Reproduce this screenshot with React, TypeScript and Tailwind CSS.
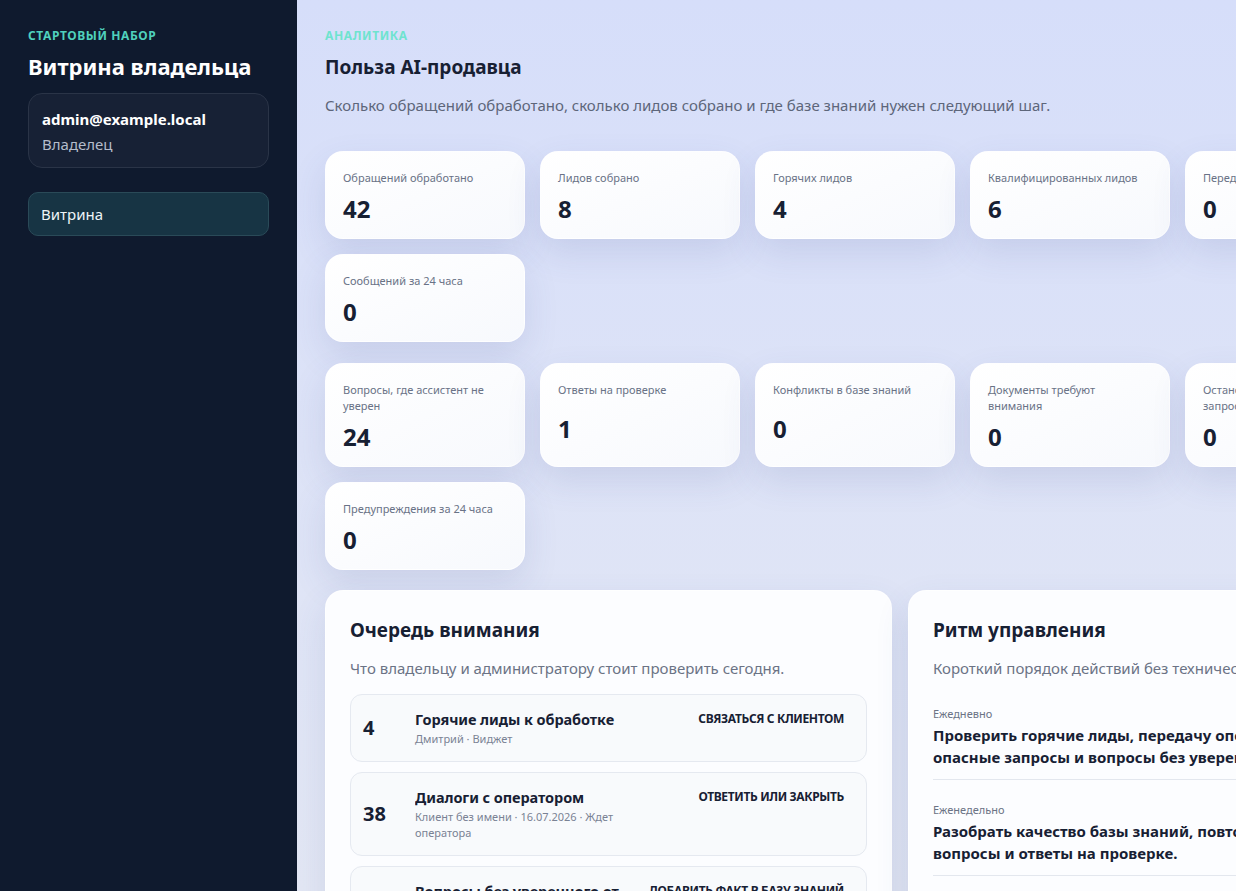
import React from "react";

type Metric = { label: string; value: number };

const usage: Metric[] = [
  { label: "Обращений обработано", value: 42 },
  { label: "Лидов собрано", value: 8 },
  { label: "Горячих лидов", value: 4 },
  { label: "Квалифицированных лидов", value: 6 },
  { label: "Передано оператору", value: 0 },
  { label: "Сообщений за 24 часа", value: 0 },
];

const quality: Metric[] = [
  { label: "Вопросы, где ассистент не уверен", value: 24 },
  { label: "Ответы на проверке", value: 1 },
  { label: "Конфликты в базе знаний", value: 0 },
  { label: "Документы требуют внимания", value: 0 },
  { label: "Остановленные опасные запросы", value: 0 },
  { label: "Предупреждения за 24 часа", value: 0 },
];

const queue = [
  { count: 4, title: "Горячие лиды к обработке", meta: "Дмитрий · Виджет", action: "Связаться с клиентом" },
  {
    count: 38,
    title: "Диалоги с оператором",
    meta: "Клиент без имени · 16.07.2026 · Ждет оператора",
    action: "Ответить или закрыть",
  },
  {
    count: 24,
    title: "Вопросы без уверенного ответа",
    meta: "Что входит в тариф · Виджет",
    action: "Добавить факт в базу знаний",
  },
];

const rhythm = [
  {
    when: "Ежедневно",
    text: "Проверить горячие лиды, передачу оператору, ошибки бота, опасные запросы и вопросы без уверенного ответа.",
  },
  {
    when: "Еженедельно",
    text: "Разобрать качество базы знаний, повторяющиеся обращения, вопросы и ответы на проверке.",
  },
  {
    when: "Ежемесячно",
    text: "Сверить цены, условия и документы с тем, что говорит ассистент.",
  },
];

function MetricGrid({ items }: { items: Metric[] }) {
  return (
    <div className="grid grid-cols-[repeat(auto-fill,200px)] gap-[15px]">
      {items.map((m) => (
        <div
          key={m.label}
          className="flex flex-col justify-between gap-[7px] rounded-[18px] border border-white/70 bg-gradient-to-br from-white to-[#f7f9fd] px-[17px] pt-[18px] pb-[6px] shadow-[0_14px_34px_rgba(60,80,150,0.13)]"
        >
          <div className="text-[11px] leading-[16px] text-[#697286]">{m.label}</div>
          <div className="text-[24px] font-bold leading-[32px] text-[#172033]">{m.value}</div>
          <div />
        </div>
      ))}
    </div>
  );
}

export default function App() {
  return (
    <div className="flex h-screen overflow-hidden font-['Noto_Sans',sans-serif]">
      <aside className="w-[297px] shrink-0 bg-[#0f1a2e] px-[28px] pt-[28px]">
        <div className="text-[12px] font-bold uppercase leading-[16px] tracking-[0.05em] text-[#4fd1bd]">
          Стартовый набор
        </div>
        <h1 className="mt-[7px] text-[22px] font-bold leading-[30px] text-white">Витрина владельца</h1>

        <div className="mt-[12px] flex flex-col gap-[3px] rounded-[14px] border border-[#2a3447] bg-[#172135] px-[13px] pt-[14px] pb-[12px]">
          <div className="text-[15px] font-bold leading-[22px] text-white">admin@example.local</div>
          <div className="text-[15px] leading-[22px] text-[#b4bccb]">Владелец</div>
        </div>

        <nav className="mt-[24px]">
          <div className="flex h-[44px] items-center rounded-[10px] border border-[#2a4a58] bg-[#173444] px-[12px] text-[15px] text-[#eef4f7]">
            Витрина
          </div>
        </nav>
      </aside>

      <main className="w-[1206px] shrink-0 bg-gradient-to-b from-[#d6defa] via-[#dde3f7] to-[#e3e7f4] px-[28px] pt-[28px]">
        <div className="w-[1150px]">
          <div className="text-[12px] font-bold uppercase leading-[16px] tracking-[0.05em] text-[#6fe3cf]">
            Аналитика
          </div>
          <h2 className="mt-[10px] text-[19px] font-bold leading-[26px] text-[#172033]">Польза AI-продавца</h2>
          <p className="mt-[14px] text-[15px] leading-[22px] text-[#5d667a]">
            Сколько обращений обработано, сколько лидов собрано и где базе знаний нужен следующий шаг.
          </p>

          <div className="mt-[35px]">
            <MetricGrid items={usage} />
          </div>
          <div className="mt-[21px]">
            <MetricGrid items={quality} />
          </div>

          <div className="mt-[20px] grid grid-cols-2 gap-[16px]">
            <section className="rounded-[18px] border border-white/80 bg-[#fcfdff] p-[24px] shadow-[0_14px_34px_rgba(60,80,150,0.12)]">
              <h3 className="text-[19px] font-bold leading-[30px] text-[#172033]">Очередь внимания</h3>
              <p className="mt-[12px] text-[15px] leading-[22px] text-[#6b7385]">
                Что владельцу и администратору стоит проверить сегодня.
              </p>
              <div className="mt-[15px] flex flex-col gap-[10px]">
                {queue.map((q) => (
                  <div
                    key={q.title}
                    className="grid grid-cols-[38px_minmax(0,1fr)_196px] items-center gap-[14px] rounded-[12px] border border-[#e5e9f0] bg-[#f8fafc] py-[14px] pr-[22px] pl-[12px]"
                  >
                    <div className="text-[20px] font-bold leading-[28px] text-[#172033]">{q.count}</div>
                    <div className="flex min-w-0 flex-col gap-[2px]">
                      <div className="truncate text-[14.5px] font-bold leading-[20px] tracking-[-0.005em] text-[#172033]">
                        {q.title}
                      </div>
                      <div className="text-[11px] leading-[16px] text-[#7a8294]">{q.meta}</div>
                    </div>
                    <div className="self-start whitespace-nowrap text-right text-[12px] font-bold uppercase leading-[20px] tracking-[-0.03em] text-[#172033]">
                      {q.action}
                    </div>
                  </div>
                ))}
              </div>
            </section>

            <section className="rounded-[18px] border border-white/80 bg-[#fcfdff] p-[24px] shadow-[0_14px_34px_rgba(60,80,150,0.12)]">
              <h3 className="text-[19px] font-bold leading-[30px] text-[#172033]">Ритм управления</h3>
              <p className="mt-[12px] text-[15px] leading-[22px] text-[#6b7385]">
                Короткий порядок действий без технических деталей.
              </p>
              <div className="mt-[14px] flex flex-col gap-[9px]">
                {rhythm.map((r) => (
                  <div key={r.when} className="border-b border-[#e3e7ee] pt-[13px] pb-[11px]">
                    <div className="text-[11px] leading-[16px] text-[#6b7385]">{r.when}</div>
                    <div className="mt-[2px] text-[15px] font-bold leading-[22px] text-[#172033]">{r.text}</div>
                  </div>
                ))}
              </div>
            </section>
          </div>
        </div>
      </main>
    </div>
  );
}
